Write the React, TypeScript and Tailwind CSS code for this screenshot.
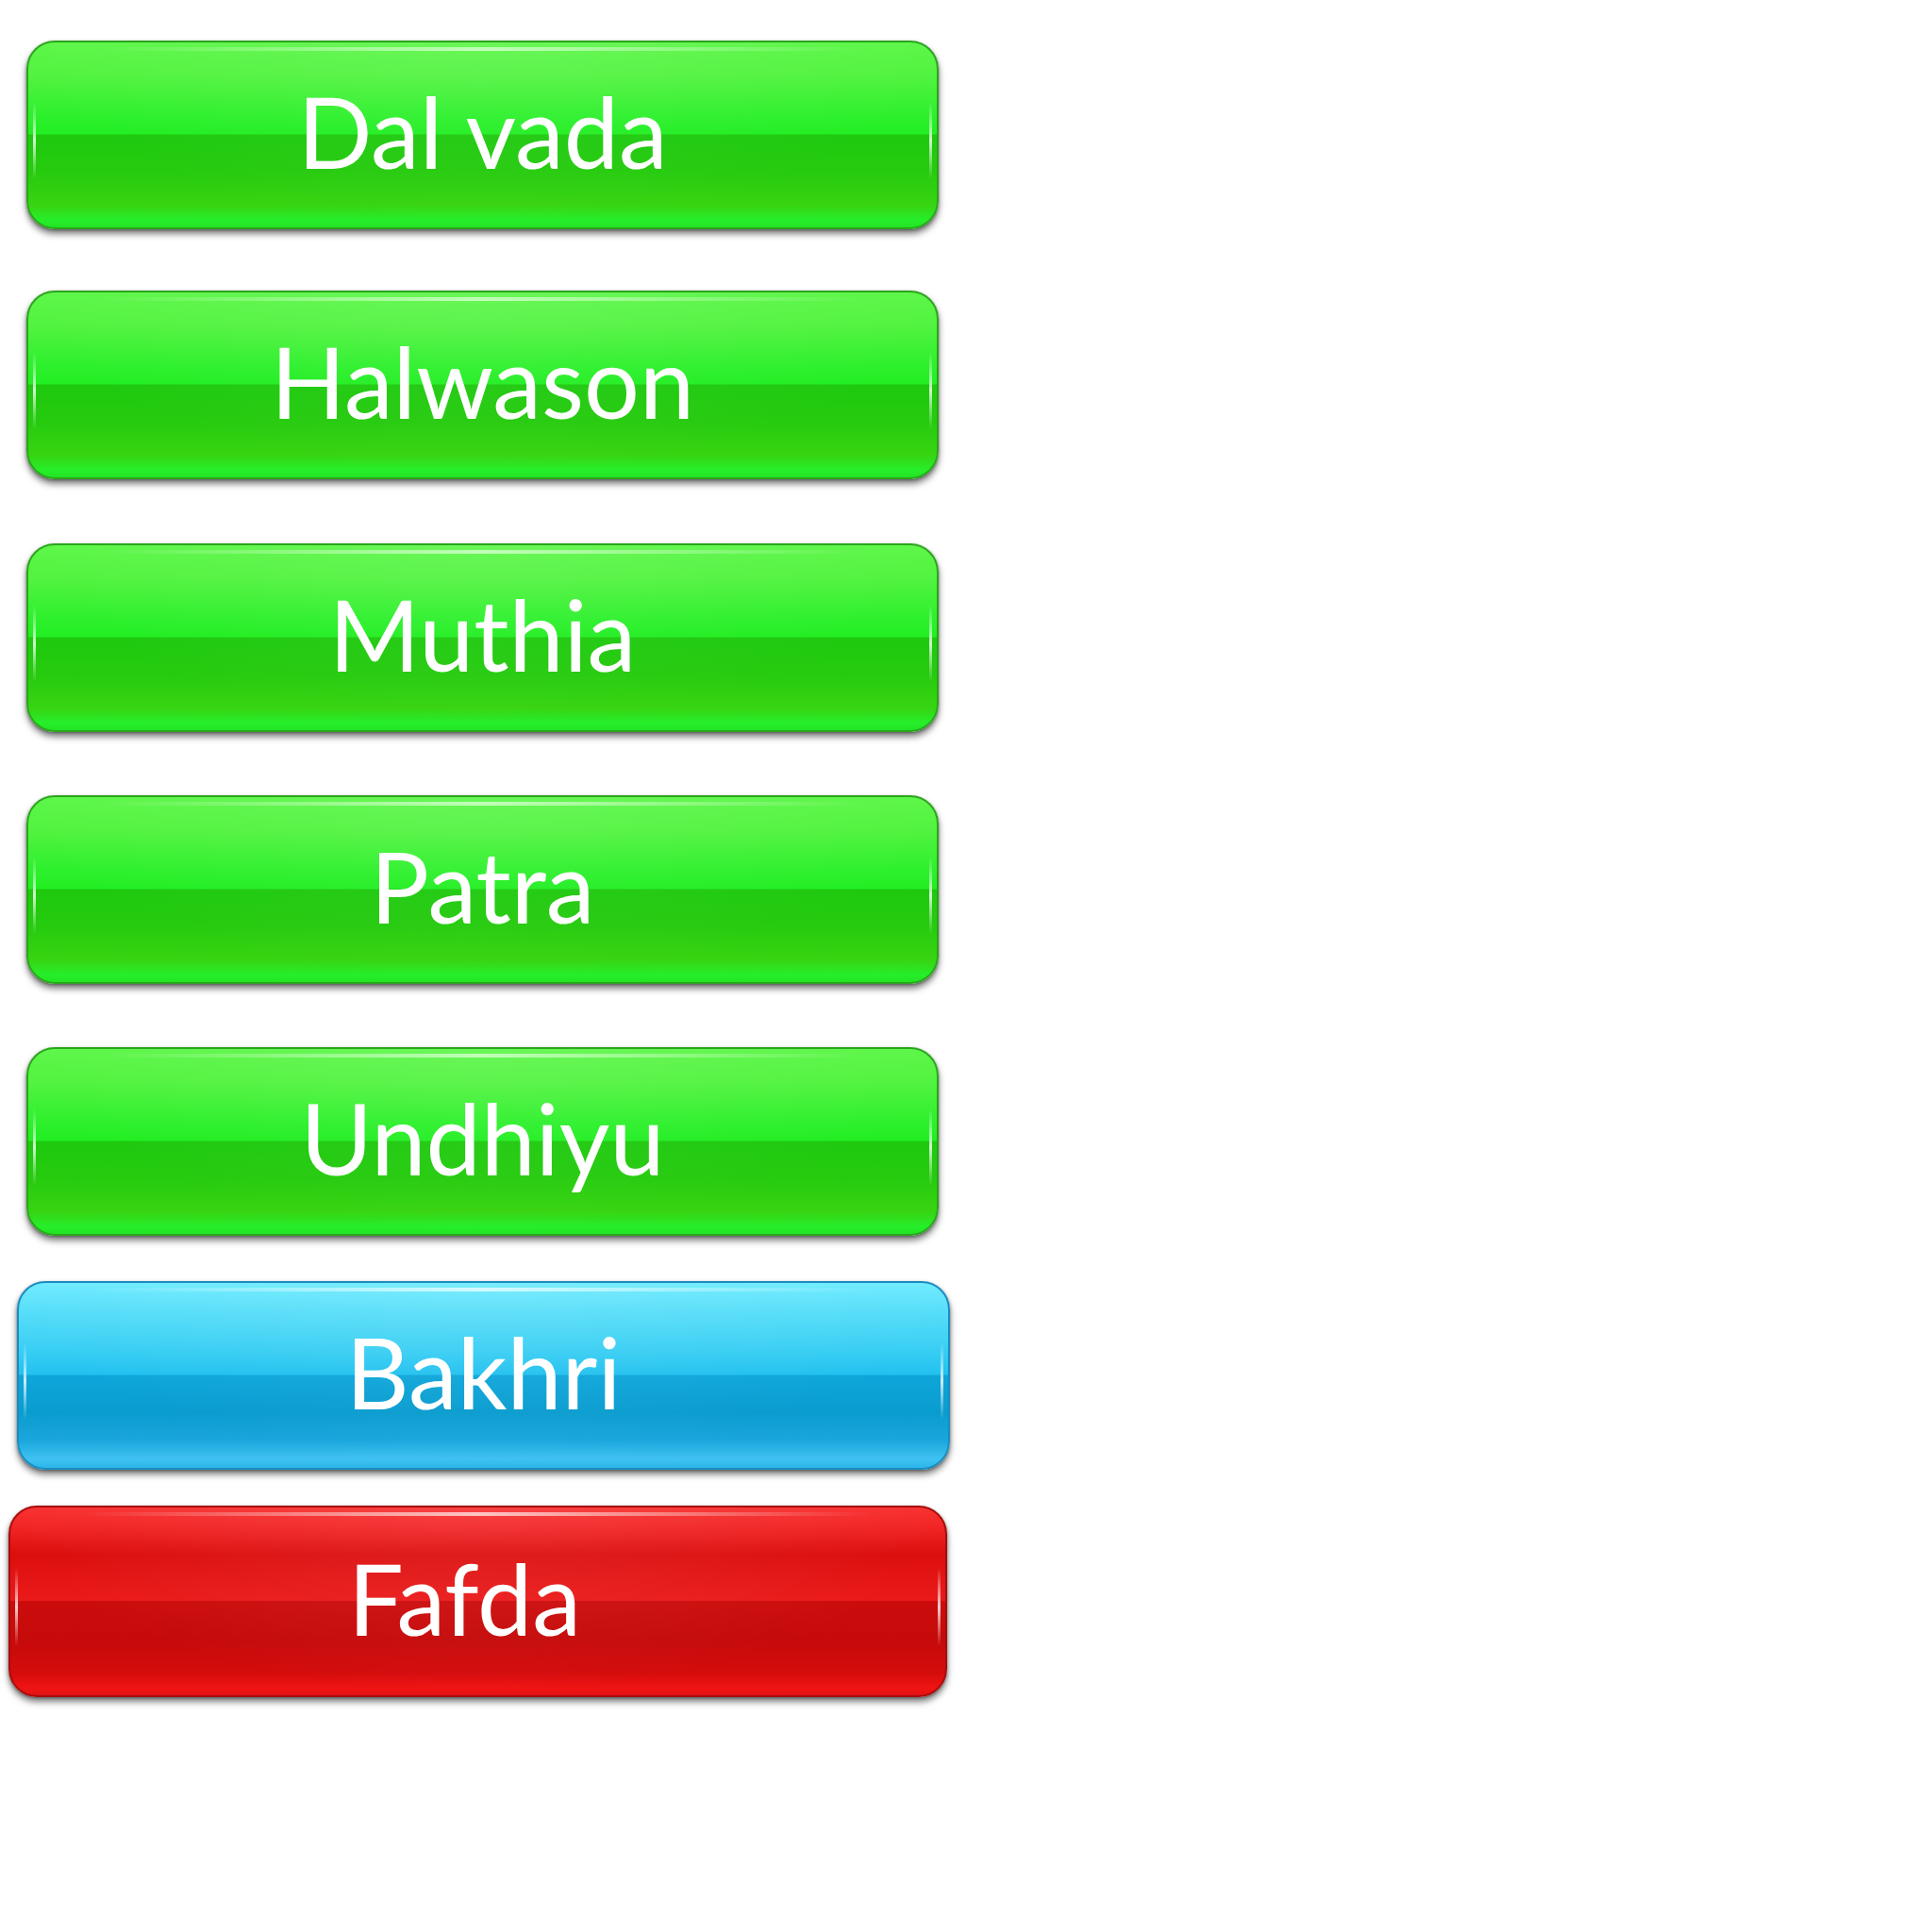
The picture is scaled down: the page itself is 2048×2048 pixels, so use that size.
import React from "react";

type Tone = "green" | "blue" | "red";

const tones: Record<Tone, { body: string; border: string; line: string }> = {
  green: {
    body: "bg-[linear-gradient(to_bottom,#5ef64a_0%,#52f340_18%,#2df02c_40%,#22ee22_49.5%,#1ec90e_50%,#26cb0e_70%,#38d412_88%,#26ee2a_96%,#22e424_100%)]",
    border: "border-[#2aa51c]",
    line: "via-[#c8ffc0]",
  },
  blue: {
    body: "bg-[linear-gradient(to_bottom,#70ecff_0%,#58def9_15%,#36cdf3_38%,#22c1ef_49.5%,#0ea6da_50%,#0a9ccf_70%,#1aa6dc_85%,#3fc2f2_95%,#2db6ea_100%)]",
    border: "border-[#1a8cc0]",
    line: "via-[#dcfbff]",
  },
  red: {
    body: "bg-[linear-gradient(to_bottom,#f83232_0%,#f22626_10%,#dc0e0e_25%,#e81818_45%,#ea1a1a_49.5%,#cc0c0c_50%,#c60a0a_70%,#d40c0c_88%,#f01414_96%,#e41212_100%)]",
    border: "border-[#a80c0c]",
    line: "via-[#ffd0d0]",
  },
};

const GlossButton = ({
  label,
  tone,
  className,
  textClass = "",
}: {
  label: string;
  tone: Tone;
  className: string;
  textClass?: string;
}) => {
  const t = tones[tone];
  return (
    <div
      className={`relative flex h-[200px] items-center justify-center rounded-[30px] border-2 ${t.border} ${t.body} shadow-[0_5px_7px_rgba(0,0,0,0.5),0_1px_3px_rgba(0,0,0,0.35)] ${className}`}
    >
      <div
        className={`absolute left-[8%] right-[8%] top-[5px] h-[4px] rounded-full bg-gradient-to-r from-transparent ${t.line} to-transparent opacity-90`}
      />
      <div className="absolute left-[5px] top-[32%] h-[42%] w-[3px] rounded-full bg-gradient-to-b from-transparent via-white to-transparent opacity-80" />
      <div className="absolute right-[5px] top-[32%] h-[42%] w-[3px] rounded-full bg-gradient-to-b from-transparent via-white to-transparent opacity-80" />
      <div className="pointer-events-none absolute inset-0 rounded-[28px] bg-[radial-gradient(ellipse_at_50%_0%,rgba(255,255,255,0.08),transparent_70%)]" />
      <span
        className={`relative -translate-y-[4px] text-[104px] leading-none tracking-[0px] text-white ${textClass}`}
        style={{ fontFamily: "Lato, 'Open Sans', sans-serif" }}
      >
        {label}
      </span>
    </div>
  );
};

export default function App() {
  return (
    <div className="min-h-screen w-[2048px] bg-white">
      <div className="flex flex-col pt-[43px]">
        <GlossButton label="Dal vada" tone="green" className="ml-[28px] w-[967px]" />
        <GlossButton label="Halwason" tone="green" className="ml-[28px] mt-[65px] w-[967px]" />
        <GlossButton label="Muthia" tone="green" className="ml-[28px] mt-[68px] w-[967px]" />
        <GlossButton label="Patra" tone="green" className="ml-[28px] mt-[67px] w-[967px]" />
        <GlossButton label="Undhiyu" tone="green" className="ml-[28px] mt-[67px] w-[967px]" />
        <GlossButton label="Bakhri" tone="blue" className="ml-[18px] mt-[48px] w-[989px]" />
        <GlossButton label="Fafda" tone="red" className="ml-[9px] mt-[38px] h-[203px] w-[995px]" textClass="-translate-x-[14px]" />
      </div>
    </div>
  );
}
